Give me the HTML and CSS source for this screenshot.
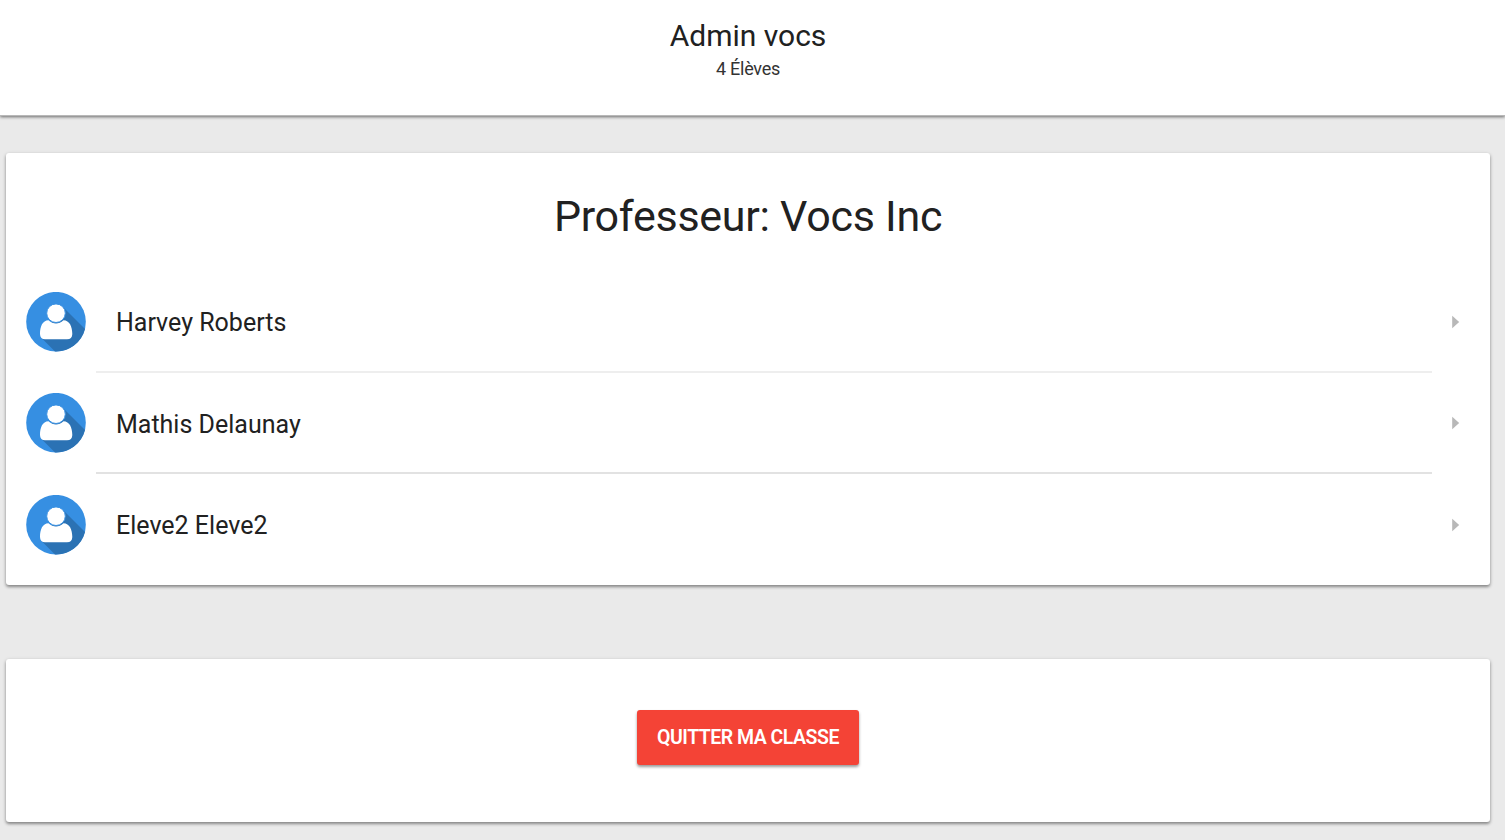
FILE: index.html
```html
<!DOCTYPE html>
<html lang="fr">
<head>
<meta charset="utf-8">
<title>Admin vocs</title>
<link rel="stylesheet" href="styles.css">
</head>
<body>
<svg class="defs" width="0" height="0" aria-hidden="true">
  <symbol id="user" viewBox="0 0 60 60">
    <circle cx="30" cy="29.700" r="29.800" fill="#368fe2"/>
    <path d="M37 15 L59 37 A29.800 29.800 0 0 1 29 59.500 L15 45.500 Z" fill="#2b72b4"/>
    <path d="M22.500 28.300 C16.500 28.500 14 34.500 14 42 C14 45.500 16 47.300 19 47.300 H41 C44.500 47.300 46.300 45.500 46.300 42 C46.300 34.500 43.500 28.500 37.500 28.300 C35 30.700 32.500 31.500 30 31.500 C27.500 31.500 25 30.700 22.500 28.300 Z" fill="#fff"/>
    <circle cx="30" cy="21.200" r="9.300" fill="#fff" stroke="#368fe2" stroke-width="1"/>
  </symbol>
  <symbol id="arrow" viewBox="0 0 8 14"><path d="M0.200 0.800 L7.200 7 L0.200 13.200 Z" fill="#b8b8b8"/></symbol>
</svg>
<header class="topbar">
  <h1 class="title">Admin vocs</h1>
  <p class="subtitle">4 Élèves</p>
</header>
<main class="content">
  <section class="card students">
    <h2 class="teacher">Professeur: Vocs Inc</h2>
    <ul class="list">
      <li class="row"><svg class="avatar"><use href="#user"/></svg><span class="name">Harvey Roberts</span><svg class="arrow"><use href="#arrow"/></svg></li>
      <li class="row"><svg class="avatar"><use href="#user"/></svg><span class="name">Mathis Delaunay</span><svg class="arrow"><use href="#arrow"/></svg></li>
      <li class="row"><svg class="avatar"><use href="#user"/></svg><span class="name">Eleve2 Eleve2</span><svg class="arrow"><use href="#arrow"/></svg></li>
    </ul>
  </section>
  <section class="card leave"><button class="quit">QUITTER MA CLASSE</button></section>
</main>
</body>
</html>
```
FILE: styles.css
```css
* { box-sizing: border-box; }
body { margin: 0; height: 840px; overflow: hidden; background: #eaeaea; color: #212121; font-family: Roboto, sans-serif; }
h1, h2, p, ul { margin: 0; padding: 0; font-weight: 400; }
.defs { display: block; height: 0; }
.topbar { height: 116px; padding: 16px 9px 0 0; background: #fff; text-align: center; border-bottom: 1px solid #b8b8b8; box-shadow: 0 1px 3px rgba(0,0,0,.55); }
.title { font-size: 30px; line-height: 40px; }
.subtitle { font-size: 18px; line-height: 26px; letter-spacing: -.25px; color: #333; }
.content { display: flex; flex-direction: column; gap: 74px; padding: 37px 15px 0 6px; }
.card { background: #fff; border-radius: 3px; box-shadow: 0 2px 3px rgba(0,0,0,.35), 0 1px 4px rgba(0,0,0,.15); }
.students { height: 432px; padding-top: 33px; }
.teacher { font-size: 43px; line-height: 60px; letter-spacing: -.28px; text-align: center; }
.list { list-style: none; padding: 25px 30px 0 20px; }
.row { display: flex; align-items: center; height: 101.500px; }
.avatar { width: 60px; height: 60px; margin-right: 10px; }
.name { flex: 1; align-self: stretch; display: flex; align-items: center; padding: 4px 0 0 20px; margin-right: 20px; font-size: 25px; border-bottom: 2px solid #eee; }
.row:nth-child(2) .name { border-bottom-color: #e2e2e2; }
.row:last-child .name { border-bottom-color: transparent; }
.arrow { width: 8px; height: 14px; }
.leave { height: 163px; display: flex; justify-content: center; padding-top: 50.500px; }
.quit { width: 222px; height: 55px; border: 0; border-radius: 3px; background: #f44336; color: #fff; font: 600 19.500px Roboto, sans-serif; letter-spacing: -.5px; padding: 0; box-shadow: 0 2px 3px rgba(0,0,0,.4); }
```
